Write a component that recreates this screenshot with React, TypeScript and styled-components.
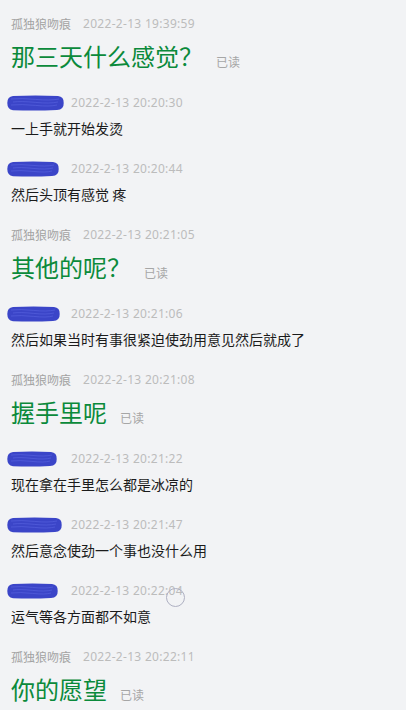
import React from "react";
import styled, { createGlobalStyle } from "styled-components";

const GlobalStyle = createGlobalStyle`
  html, body {
    margin: 0;
    padding: 0;
    background: #f2f3f5;
  }
  body {
    font-family: "Noto Sans CJK SC", "Noto Sans", sans-serif;
  }
`;

type Msg = {
  self: boolean;
  time: string;
  text: string;
  blob?: number;
};

const messages: Msg[] = [
  { self: true, time: "2022-2-13 19:39:59", text: "那三天什么感觉？" },
  { self: false, time: "2022-2-13 20:20:30", text: "一上手就开始发烫", blob: 57 },
  { self: false, time: "2022-2-13 20:20:44", text: "然后头顶有感觉 疼", blob: 52 },
  { self: true, time: "2022-2-13 20:21:05", text: "其他的呢？" },
  { self: false, time: "2022-2-13 20:21:06", text: "然后如果当时有事很紧迫使劲用意见然后就成了", blob: 53 },
  { self: true, time: "2022-2-13 20:21:08", text: "握手里呢" },
  { self: false, time: "2022-2-13 20:21:22", text: "现在拿在手里怎么都是冰凉的", blob: 50 },
  { self: false, time: "2022-2-13 20:21:47", text: "然后意念使劲一个事也没什么用", blob: 55 },
  { self: false, time: "2022-2-13 20:22:04", text: "运气等各方面都不如意", blob: 51 },
  { self: true, time: "2022-2-13 20:22:11", text: "你的愿望" },
];

const Page = styled.div`
  position: relative;
  padding: 14px 11px 0;
  display: flex;
  flex-direction: column;
  gap: 21px;
`;

const Block = styled.div`
  display: flex;
  flex-direction: column;
`;

const Header = styled.div`
  display: flex;
  align-items: center;
  gap: 12px;
  height: 20px;
  font-size: 12px;
  line-height: 20px;
`;

const Name = styled.span`
  color: #a3a3a3;
`;

const Time = styled.span`
  font-family: "Noto Sans", "Noto Sans CJK SC", sans-serif;
  letter-spacing: 0.3px;
  color: #bcbcbc;
`;

const BlobSlot = styled.span`
  display: flex;
  align-items: center;
  width: 48px;
  height: 20px;
  overflow: visible;

  svg {
    display: block;
    flex-shrink: 0;
    margin-left: -4px;
  }
`;

const Text = styled.div`
  margin-top: 5px;
  font-size: 14px;
  line-height: 20px;
  color: #1b1b1b;
`;

const SelfRow = styled.div`
  margin-top: 6px;
  display: flex;
  align-items: flex-end;
  gap: 13px;
`;

const BigText = styled.span`
  font-size: 24px;
  line-height: 32px;
  color: #0b8a3b;
`;

const Read = styled.span`
  font-size: 12px;
  line-height: 20px;
  color: #a6a6a6;
`;

const Cursor = styled.div`
  position: absolute;
  left: 166px;
  top: 588px;
  width: 17px;
  height: 17px;
  border: 1.5px solid #aeb0c2;
  border-radius: 50%;
`;

function Blob(props: { width: number }) {
  const w = props.width;
  const lines = [4, 7, 10];
  return (
    <svg width={w} height={16} viewBox={`0 0 ${w} 16`}>
      <path
        d={`M 6 1 Q ${w * 0.5} 0 ${w - 6} 1 Q ${w} 1.5 ${w - 0.3} 8 Q ${w} 14.5 ${w - 7} 15 Q ${w * 0.5} 16 6 15.2 Q 0.3 14.5 0.3 8 Q 0.3 1.5 6 1 Z`}
        fill="#3b45c8"
      />
      {lines.map((y, i) => (
        <path
          key={y}
          d={`M ${4 + (i % 2) * 2} ${y} Q ${w * 0.25} ${y - 1} ${w * 0.5} ${y + 0.4} T ${w - 5 - (i % 3)} ${y}`}
          stroke="#5b66e2"
          strokeWidth={0.8}
          fill="none"
          opacity={0.7}
        />
      ))}
    </svg>
  );
}

function Message(props: { msg: Msg }) {
  const { msg } = props;
  if (msg.self) {
    return (
      <Block>
        <Header>
          <Name>孤独狼吻痕</Name>
          <Time>{msg.time}</Time>
        </Header>
        <SelfRow>
          <BigText>{msg.text}</BigText>
          <Read>已读</Read>
        </SelfRow>
      </Block>
    );
  }
  return (
    <Block>
      <Header>
        <BlobSlot>
          <Blob width={msg.blob ?? 55} />
        </BlobSlot>
        <Time>{msg.time}</Time>
      </Header>
      <Text>{msg.text}</Text>
    </Block>
  );
}

export default function App() {
  return (
    <>
      <GlobalStyle />
      <Page>
        {messages.map((m, idx) => (
          <Message msg={m} key={idx} />
        ))}
        <Cursor />
      </Page>
    </>
  );
}
